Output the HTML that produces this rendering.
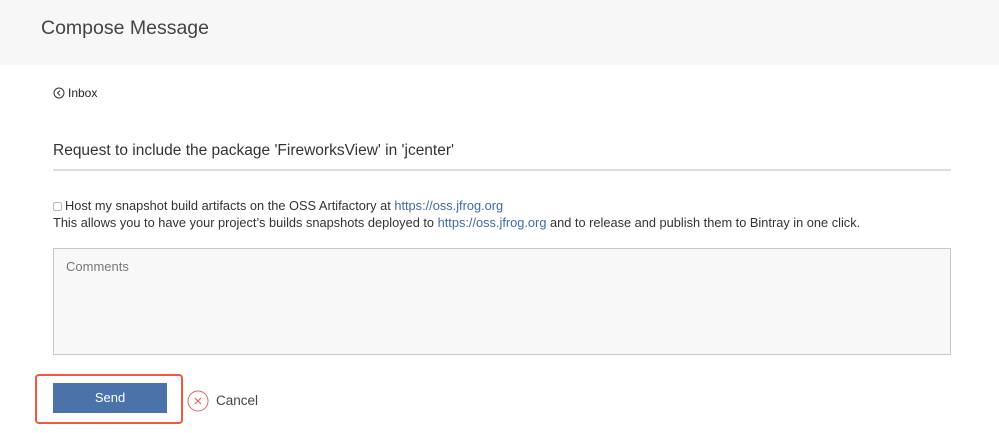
<!DOCTYPE html>
<html><head><meta charset="utf-8"><style>
*{box-sizing:border-box;margin:0;padding:0}
body{width:999px;height:433px;background:#fff;font-family:"Liberation Sans",sans-serif;color:#333;position:relative;overflow:hidden}
.hdr{position:absolute;left:0;top:0;width:999px;height:65px;background:#f7f7f7}
.hdr h1{position:absolute;left:41px;top:17px;font-size:19.5px;font-weight:normal;color:#444}
.abs{position:absolute}
a{color:#3d6aa6;text-decoration:none}
</style></head><body>
<div class="hdr"><h1>Compose Message</h1></div>
<div class="abs" style="left:53px;top:86px;font-size:12px;color:#222;display:flex;align-items:center">
<svg width="12" height="12" viewBox="0 0 12 12" style="margin-right:3px"><circle cx="6" cy="6" r="5" fill="none" stroke="#333" stroke-width="1"/><path d="M7 3.5L4.5 6L7 8.5" fill="none" stroke="#333" stroke-width="1"/></svg>Inbox</div>
<div class="abs" style="left:53px;top:142px;font-size:15.5px;color:#333">Request to include the package 'FireworksView' in 'jcenter'</div>
<div class="abs" style="left:53px;top:169px;width:898px;height:2px;background:#ddd"></div>
<div class="abs" style="left:53px;top:197px;font-size:12.8px;color:#333;line-height:17px;white-space:nowrap">
<span style="display:inline-block;width:9px;height:9px;border:1px solid #bbb;border-radius:2px;vertical-align:-1px;margin-right:3px"></span>Host my snapshot build artifacts on the OSS Artifactory at <a>https://oss.jfrog.org</a><br>
This allows you to have your project’s builds snapshots deployed to <a>https://oss.jfrog.org</a> and to release and publish them to Bintray in one click.</div>
<div class="abs" style="left:53px;top:248px;width:898px;height:107px;border:1px solid #c8c8c8;background:#f8f8f8"></div>
<div class="abs" style="left:66px;top:259px;font-size:13px;color:#777">Comments</div>
<div class="abs" style="left:35px;top:374px;width:148px;height:50px;border:2px solid #ee5a3c;border-radius:4px"></div>
<div class="abs" style="left:53px;top:383px;width:114px;height:30px;background:#4c72aa;color:#fff;font-size:13px;text-align:center;line-height:30px">Send</div>
<svg class="abs" style="left:187px;top:390px" width="22" height="22" viewBox="0 0 22 22"><circle cx="11" cy="11" r="10" fill="none" stroke="#e06464" stroke-width="1"/><path d="M8 8L14 14M14 8L8 14" stroke="#e06464" stroke-width="1.2"/></svg>
<div class="abs" style="left:216px;top:393px;font-size:13.5px;color:#444">Cancel</div>
</body></html>
